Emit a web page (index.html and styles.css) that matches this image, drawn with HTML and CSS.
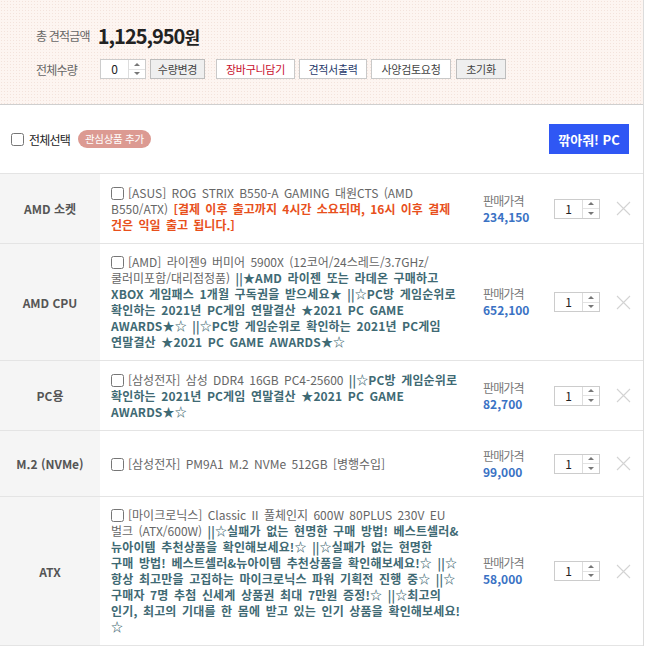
FILE: index.html
```html
<!DOCTYPE html>
<html lang="ko">
<head>
<meta charset="utf-8">
<title>견적</title>
<link rel="stylesheet" href="styles.css">
</head>
<body>
<div class="wrap">
  <div class="summary">
    <div class="total-line">
      <span class="total-label">총 견적금액</span>
      <span class="total-amount">1,125,950<span class="won">원</span></span>
    </div>
    <div class="qty-line">
      <span class="qty-label">전체수량</span>
      <div class="num num-top">
        <span class="num-val">0</span>
        <span class="spin"><span class="up"></span><span class="down"></span></span>
      </div>
      <button class="btn btn-gray btn-change">수량변경</button>
      <button class="btn btn-red">장바구니담기</button>
      <button class="btn btn-navy">견적서출력</button>
      <button class="btn btn-review">사양검토요청</button>
      <button class="btn btn-gray btn-reset">초기화</button>
    </div>
  </div>

  <div class="toolbar">
    <label class="all"><input type="checkbox" class="chk"><span>전체선택</span></label>
    <span class="pill">관심상품 추가</span>
    <span class="spacer"></span>
    <button class="cta">깎아줘! PC</button>
  </div>

  <div class="rows">
    <div class="row">
      <div class="cat">AMD 소켓</div>
      <div class="desc"><input type="checkbox" class="chk chk-item">[ASUS] ROG STRIX B550-A GAMING 대원CTS (AMD B550/ATX) <b class="red">[결제 이후 출고까지 4시간 소요되며, 16시 이후 결제 건은 익일 출고 됩니다.]</b></div>
      <div class="price"><span class="plabel">판매가격</span><span class="pval">234,150</span></div>
      <div class="qty"><div class="num"><span class="num-val">1</span><span class="spin"><span class="up"></span><span class="down"></span></span></div></div>
      <div class="del"><svg width="15" height="15" viewBox="0 0 15 15"><path d="M1 1L14 14M14 1L1 14" stroke="#d3d3d3" stroke-width="1.1" fill="none"/></svg></div>
    </div>

    <div class="row">
      <div class="cat">AMD CPU</div>
      <div class="desc"><input type="checkbox" class="chk chk-item">[AMD] 라이젠9 버미어 5900X (12코어/24스레드/3.7GHz/쿨러미포함/대리점정품) <b class="teal">||★AMD 라이젠 또는 라데온 구매하고 XBOX 게임패스 1개월 구독권을 받으세요★ ||☆PC방 게임순위로 확인하는 2021년 PC게임 연말결산 ★2021 PC GAME AWARDS★☆ ||☆PC방 게임순위로 확인하는 2021년 PC게임 연말결산 ★2021 PC GAME AWARDS★☆</b></div>
      <div class="price"><span class="plabel">판매가격</span><span class="pval">652,100</span></div>
      <div class="qty"><div class="num"><span class="num-val">1</span><span class="spin"><span class="up"></span><span class="down"></span></span></div></div>
      <div class="del"><svg width="15" height="15" viewBox="0 0 15 15"><path d="M1 1L14 14M14 1L1 14" stroke="#d3d3d3" stroke-width="1.1" fill="none"/></svg></div>
    </div>

    <div class="row">
      <div class="cat">PC용</div>
      <div class="desc"><input type="checkbox" class="chk chk-item">[삼성전자] 삼성 DDR4 16GB PC4-25600 <b class="teal">||☆PC방 게임순위로 확인하는 2021년 PC게임 연말결산 ★2021 PC GAME AWARDS★☆</b></div>
      <div class="price"><span class="plabel">판매가격</span><span class="pval">82,700</span></div>
      <div class="qty"><div class="num"><span class="num-val">1</span><span class="spin"><span class="up"></span><span class="down"></span></span></div></div>
      <div class="del"><svg width="15" height="15" viewBox="0 0 15 15"><path d="M1 1L14 14M14 1L1 14" stroke="#d3d3d3" stroke-width="1.1" fill="none"/></svg></div>
    </div>

    <div class="row row-short">
      <div class="cat">M.2 (NVMe)</div>
      <div class="desc"><input type="checkbox" class="chk chk-item">[삼성전자] PM9A1 M.2 NVMe 512GB [병행수입]</div>
      <div class="price"><span class="plabel">판매가격</span><span class="pval">99,000</span></div>
      <div class="qty"><div class="num"><span class="num-val">1</span><span class="spin"><span class="up"></span><span class="down"></span></span></div></div>
      <div class="del"><svg width="15" height="15" viewBox="0 0 15 15"><path d="M1 1L14 14M14 1L1 14" stroke="#d3d3d3" stroke-width="1.1" fill="none"/></svg></div>
    </div>

    <div class="row">
      <div class="cat">ATX</div>
      <div class="desc"><input type="checkbox" class="chk chk-item">[마이크로닉스] Classic II 풀체인지 600W 80PLUS 230V EU 벌크 (ATX/600W) <b class="teal">||☆실패가 없는 현명한 구매 방법! 베스트셀러&amp;<wbr>뉴아이템 추천상품을 확인해보세요!☆ ||☆실패가 없는 현명한<br>구매 방법! 베스트셀러&amp;뉴아이템 추천상품을 확인해보세요!☆ ||<wbr>☆항상 최고만을 고집하는 마이크로닉스 파워 기획전 진행 중☆ ||<wbr>☆구매자 7명 추첨 신세계 상품권 최대 7만원 증정!☆ ||<wbr>☆최고의 인기, 최고의 기대를 한 몸에 받고 있는 인기 상품을 확인해보세요!<wbr>☆</b></div>
      <div class="price"><span class="plabel">판매가격</span><span class="pval">58,000</span></div>
      <div class="qty"><div class="num"><span class="num-val">1</span><span class="spin"><span class="up"></span><span class="down"></span></span></div></div>
      <div class="del"><svg width="15" height="15" viewBox="0 0 15 15"><path d="M1 1L14 14M14 1L1 14" stroke="#d3d3d3" stroke-width="1.1" fill="none"/></svg></div>
    </div>
  </div>
</div>
</body>
</html>
```

FILE: styles.css
```css
* { box-sizing: border-box; }
html, body { margin: 0; padding: 0; background: #fff; }
body {
  font-family: "Noto Sans CJK KR", "Noto Sans", sans-serif;
  font-size: 12px;
  color: #333;
}
.wrap {
  width: 644px;
  border-right: 1px solid #dcdcdc;
}

/* summary */
.summary {
  height: 105px;
  padding: 23px 0 0 36px;
  background-color: #fdf5f1;
  background-image: radial-gradient(#f3e3dc 0.7px, transparent 0.8px);
  background-size: 3px 3px;
  border-bottom: 1px solid #cfcfcf;
}
.total-line { display: flex; align-items: center; height: 24px; }
.total-label { color: #666; font-size: 12px; margin-right: 8px; letter-spacing: -0.8px; }
.total-amount { font-size: 20px; font-weight: bold; color: #222; letter-spacing: -1px; }
.total-amount .won { font-size: 17px; letter-spacing: -1px; }
.qty-line { display: flex; align-items: center; margin-top: 12px; height: 20px; }
.qty-label { color: #666; width: 64px; letter-spacing: -0.8px; }
.num {
  display: flex;
  width: 46px;
  height: 20px;
  border: 1px solid #ccc;
  background: #fff;
}
.num-val { flex: 1; text-align: center; line-height: 18px; color: #222; font-size: 12px; }
.spin {
  width: 17px;
  border-left: 1px solid #ddd;
  display: flex;
  flex-direction: column;
}
.spin .up, .spin .down {
  flex: 1;
  display: flex;
  align-items: center;
  justify-content: center;
}
.spin .down { border-top: 1px solid #e3e3e3; }
.spin .up::after {
  content: "";
  border-left: 3px solid transparent;
  border-right: 3px solid transparent;
  border-bottom: 3px solid #777;
}
.spin .down::after {
  content: "";
  border-left: 3px solid transparent;
  border-right: 3px solid transparent;
  border-top: 3px solid #777;
}
.num-top { margin-right: 4px; }
.btn {
  font-family: inherit;
  font-size: 11px;
  height: 20px;
  padding: 0;
  margin: 0 4px 0 0;
  border: 1px solid #c9c9c9;
  background: #fff;
  color: #444;
  line-height: 17px;
  border-radius: 0;
  text-align: center;
  letter-spacing: -0.3px;
}
.btn-gray { background: #efefef; border-color: #bdbdbd; color: #444; }
.btn-change { width: 55px; margin-right: 11px; }
.btn-red { color: #c8102e; width: 79px; }
.btn-navy { color: #1f3a6b; width: 68px; }
.btn-review { width: 80px; margin-right: 5px; }
.btn-reset { width: 50px; }

/* toolbar */
.toolbar {
  display: flex;
  align-items: center;
  height: 69px;
  padding: 0 14px 0 11px;
  border-bottom: 1px solid #e4e4e4;
}
.all { display: flex; align-items: center; color: #222; font-size: 12px; letter-spacing: -0.8px; }
.chk {
  width: 13px;
  height: 13px;
  margin: 0 5px 0 0;
  vertical-align: -2px;
}
.pill {
  margin-left: 8px;
  background: #dc9a92;
  color: #fff;
  font-size: 10.5px;
  height: 18px;
  line-height: 18px;
  padding: 0 7px;
  border-radius: 9px;
  letter-spacing: -0.3px;
}
.spacer { flex: 1; }
.cta {
  font-family: inherit;
  background: #2f57f4;
  color: #fff;
  border: 0;
  font-size: 13px;
  font-weight: bold;
  width: 80px;
  height: 30px;
  padding: 0;
}

/* rows */
.row {
  display: flex;
  align-items: stretch;
  min-height: 70px;
  border-bottom: 1px solid #e4e4e4;
}
.row-short { min-height: 66px; }
.cat {
  width: 100px;
  flex: none;
  background: #f5f5f5;
  display: flex;
  align-items: center;
  justify-content: center;
  font-weight: bold;
  color: #555;
  font-size: 12px;
}
.desc {
  width: 383px;
  flex: none;
  padding: 10px 22px 10px 11px;
  line-height: 16px;
  color: #666;
  align-self: center;
  word-break: keep-all;
  word-spacing: 2px;
}
.chk-item { margin-right: 4px; }
.red { color: #e8501c; }
.teal { color: #3f6a74; letter-spacing: 0.15px; }
.price {
  width: 71px;
  flex: none;
  display: flex;
  flex-direction: column;
  justify-content: center;
  line-height: 16px;
}
.plabel { color: #777; letter-spacing: -0.9px; }
.pval { color: #3a72c4; font-weight: bold; }
.qty {
  width: 46px;
  flex: none;
  display: flex;
  align-items: center;
}
.del {
  width: 43px;
  flex: none;
  display: flex;
  align-items: center;
  padding-left: 16px;
}
.del svg { display: block; }
```
